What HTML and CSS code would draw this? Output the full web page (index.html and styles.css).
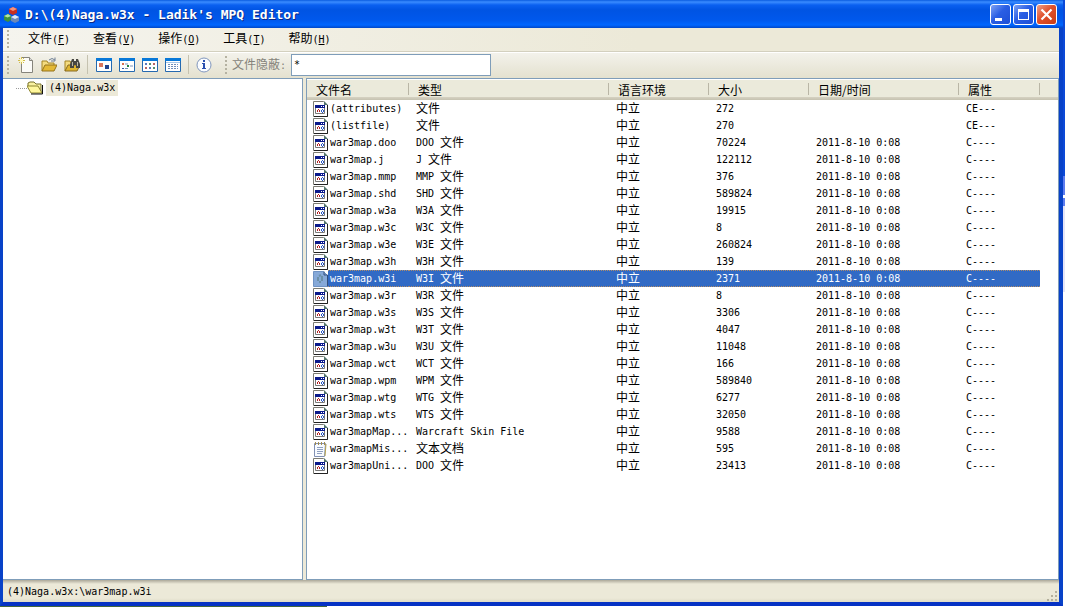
FILE: index.html
```html
<!DOCTYPE html>
<html lang="zh-CN">
<head>
<meta charset="utf-8">
<title>D:\(4)Naga.w3x - Ladik's MPQ Editor</title>
<link rel="stylesheet" href="styles.css">
</head>
<body>
<svg class="defs" aria-hidden="true">
  <symbol id="file" viewBox="0 0 15 16">
    <path d="M.5 .5h10l4 4v11H.5z" fill="#fff" stroke="#7b7b73"/>
    <path d="M14.500 4v11.500H1" fill="none" stroke="#222"/>
    <path d="M11 0l4 4h-4z" fill="#55756c"/>
    <path d="M2.500 4.500h9v8h-9z" fill="#fff" stroke="#777"/>
    <path d="M2 4h10v3H2z" fill="#0a1a8c"/>
    <path d="M8 5h1v1H8zM10 5h1v1h-1z" fill="#fff"/>
    <path d="M4 9h1v2H4zM5 8h1v1H5zM6 9h1v2H6z" fill="#b02020"/>
    <path d="M8 9h1v2H8zM9 8h1v1H9zM10 9h1v2h-1zM9 11h1v1H9z" fill="#2858c8"/>
  </symbol>
  <symbol id="file-selected" viewBox="0 0 15 16">
    <path d="M.5 .5h10l4 4v11H.5z" fill="#86a9d8" stroke="#6f93c4"/>
    <path d="M11 .5v3.500h3.500v11.500" fill="none" stroke="#35507c"/>
    <path d="M5 6v4M9 5v5M6 5l2-1M6 11h2" stroke="#6b90a8" stroke-width="2" fill="none"/>
  </symbol>
  <symbol id="text-file" viewBox="0 0 15 16">
    <path d="M1.500 2.500h11l-1 13h-10z" fill="#f8fbff" stroke="#8291b4"/>
    <path d="M13 3l-1 12" stroke="#b7a24c"/>
    <path d="M2 1h1v3H2zM5 1h1v3H5zM8 1h1v3H8zM11 1h1v3h-1z" fill="#a28d4e"/>
    <path d="M4 6.500h6M4 8.500h6M4 10.500h6M4 12.500h5" stroke="#8fa0c0"/>
  </symbol>
</svg>
<div class="window">
  <header class="titlebar">
    <svg class="app-icon" viewBox="0 0 16 16">
      <path d="M5 2l4-2 4 2v4L9 8 5 6z" fill="#c72f20"/><path d="M5 2l4-2 4 2-4 2z" fill="#f4907c"/>
      <path d="M0 9l4-2 3 2v4l-3 2-4-2z" fill="#3c913f"/><path d="M0 9l4-2 3 2-3.500 1.500z" fill="#b3e39c"/>
      <path d="M7 10l4-2 4 2v4l-4 2-4-2z" fill="#6b88b8"/><path d="M7 10l4-2 4 2-4 2z" fill="#dce8f8"/>
    </svg>
    <h1>D:\(4)Naga.w3x - Ladik's MPQ Editor</h1>
    <button class="caption" aria-label="最小化"><svg viewBox="0 0 19 19"><path d="M4 13h7v3H4z" fill="#fff"/></svg></button>
    <button class="caption" aria-label="最大化"><svg viewBox="0 0 19 19"><path d="M4 4h11v11H4zM5 7v7h9V7z" fill="#fff" fill-rule="evenodd"/></svg></button>
    <button class="caption close" aria-label="关闭"><svg viewBox="0 0 19 19"><path d="M4.500 4.500l10 10M14.500 4.500l-10 10" stroke="#fff" stroke-width="2.200"/></svg></button>
  </header>
  <nav class="menubar">
    <i class="grip"></i>
    <button><span class="zh">文件</span>(<u>F</u>)</button>
    <button><span class="zh">查看</span>(<u>V</u>)</button>
    <button><span class="zh">操作</span>(<u>O</u>)</button>
    <button><span class="zh">工具</span>(<u>T</u>)</button>
    <button><span class="zh">帮助</span>(<u>H</u>)</button>
  </nav>
  <div class="toolbar">
    <i class="grip"></i>
    <div class="tools">
      <button aria-label="新建"><svg viewBox="0 0 16 16"><path d="M3.500 .5h8l3 3v12h-11z" fill="#fbfbf8" stroke="#85847b"/><path d="M11.500 .5v3h3" fill="#ddd" stroke="#85847b"/><path d="M3.500 0v7M0 3.500h7M1 1l5 5M6 1L1 6" stroke="#d2bd4a"/><path d="M2 2h3v3H2z" fill="#fff9ba"/></svg></button>
      <button aria-label="打开"><svg viewBox="0 0 16 16"><path d="M1 14V4h5l1 2h6v3" fill="#f4dc80" stroke="#a48423"/><path d="M1 14l3-6h12l-3 6z" fill="#e3b936" stroke="#95731b"/><path d="M8 3q3-3 6 0M14 .5V4h-4" fill="none" stroke="#6e7f95"/></svg></button>
      <button aria-label="查找"><svg viewBox="0 0 16 16"><path d="M1 14V4h5l1 2h6v3" fill="#f4dc80" stroke="#a48423"/><path d="M1 14l3-6h12l-3 6z" fill="#dfb52f" stroke="#876b22"/><path d="M8 2h2v2h2V2h2l2 5v4h-4V8h-2v3H6V7z" fill="#484742"/><path d="M8 5h1v4H8zM13 5h1v4h-1z" fill="#bbb7a4"/></svg></button>
    </div>
    <i class="separator"></i>
    <div class="tools views">
      <button aria-label="大图标"><svg viewBox="0 0 16 16"><path d="M.5 1.500h15v13H.5z" fill="#fff" stroke="#2569af"/><path d="M0 1h16v3H0z" fill="#0878d8"/><path d="M3 6h4v4H3z" fill="#dc765c"/><path d="M9 8h4v4H9z" fill="#21438e"/></svg></button>
      <button aria-label="小图标"><svg viewBox="0 0 16 16"><path d="M.5 1.500h15v13H.5z" fill="#fff" stroke="#2569af"/><path d="M0 1h16v3H0z" fill="#0878d8"/><path d="M3 6h2v2H3z" fill="#d77052"/><path d="M8 8h2v2H8z" fill="#248441"/><path d="M3 11h2v1H3z" fill="#3155a2"/><path d="M6 7h3M11 9h3M6 11.500h3" stroke="#7894bb"/></svg></button>
      <button aria-label="列表"><svg viewBox="0 0 16 16"><path d="M.5 1.500h15v13H.5z" fill="#fff" stroke="#2569af"/><path d="M0 1h16v3H0z" fill="#0878d8"/><path d="M3 6h2v2H3zM7 10h2v2H7z" fill="#5578bd"/><path d="M7 6h2v2H7zM11 10h2v2h-2z" fill="#55906c"/><path d="M11 6h2v2h-2zM3 10h2v2H3z" fill="#b76464"/></svg></button>
      <button aria-label="详细信息"><svg viewBox="0 0 16 16"><path d="M.5 1.500h15v13H.5z" fill="#fff" stroke="#2569af"/><path d="M0 1h16v3H0z" fill="#0878d8"/><path d="M1 5.500h14" stroke="#a8c7e7"/><path d="M3 7.500h10M3 9.500h10M3 11.500h10" stroke="#718fbb" stroke-dasharray="2 1"/></svg></button>
    </div>
    <i class="separator"></i>
    <button class="info" aria-label="关于"><svg viewBox="0 0 16 16"><circle cx="8" cy="8" r="7" fill="#fafcff" stroke="#8096bd"/><path d="M7 3h2v2H7zM6 6h3v5h1v1H6v-1h1V7H6z" fill="#294faf"/></svg></button>
    <i class="grip second"></i>
    <label for="mask"><span class="zh">文件隐蔽</span>:</label>
    <input id="mask" type="text" value="*">
  </div>
  <main class="panes">
    <aside class="tree">
      <div class="node">
        <i class="branch"></i>
        <svg viewBox="0 0 16 14"><path d="M1 5V2l2-1h4l2 2h5v9" fill="#f8f0a0" stroke="#77702a"/><path d="M0 5h11l4 7H4z" fill="#fff79c" stroke="#8d852e"/><path d="M15.500 4v9H4" fill="none" stroke="#111"/></svg>
        <span>(4)Naga.w3x</span>
      </div>
    </aside>
    <section class="list">
      <table>
        <colgroup><col class="c-name"><col class="c-type"><col class="c-num"><col class="c-num"><col class="c-date"><col class="c-attr"></colgroup>
        <thead><tr class="zh"><th>文件名</th><th>类型</th><th>语言环境</th><th>大小</th><th>日期/时间</th><th>属性</th></tr></thead>
        <tbody>
          <tr><td><div class="name"><svg><use href="#file"/></svg><span>(attributes)</span></div></td><td><span class="zh">文件</span></td><td><span class="zh">中立</span></td><td>272</td><td></td><td>CE---</td></tr>
          <tr><td><div class="name"><svg><use href="#file"/></svg><span>(listfile)</span></div></td><td><span class="zh">文件</span></td><td><span class="zh">中立</span></td><td>270</td><td></td><td>CE---</td></tr>
          <tr><td><div class="name"><svg><use href="#file"/></svg><span>war3map.doo</span></div></td><td>DOO <span class="zh">文件</span></td><td><span class="zh">中立</span></td><td>70224</td><td>2011-8-10 0:08</td><td>C----</td></tr>
          <tr><td><div class="name"><svg><use href="#file"/></svg><span>war3map.j</span></div></td><td>J <span class="zh">文件</span></td><td><span class="zh">中立</span></td><td>122112</td><td>2011-8-10 0:08</td><td>C----</td></tr>
          <tr><td><div class="name"><svg><use href="#file"/></svg><span>war3map.mmp</span></div></td><td>MMP <span class="zh">文件</span></td><td><span class="zh">中立</span></td><td>376</td><td>2011-8-10 0:08</td><td>C----</td></tr>
          <tr><td><div class="name"><svg><use href="#file"/></svg><span>war3map.shd</span></div></td><td>SHD <span class="zh">文件</span></td><td><span class="zh">中立</span></td><td>589824</td><td>2011-8-10 0:08</td><td>C----</td></tr>
          <tr><td><div class="name"><svg><use href="#file"/></svg><span>war3map.w3a</span></div></td><td>W3A <span class="zh">文件</span></td><td><span class="zh">中立</span></td><td>19915</td><td>2011-8-10 0:08</td><td>C----</td></tr>
          <tr><td><div class="name"><svg><use href="#file"/></svg><span>war3map.w3c</span></div></td><td>W3C <span class="zh">文件</span></td><td><span class="zh">中立</span></td><td>8</td><td>2011-8-10 0:08</td><td>C----</td></tr>
          <tr><td><div class="name"><svg><use href="#file"/></svg><span>war3map.w3e</span></div></td><td>W3E <span class="zh">文件</span></td><td><span class="zh">中立</span></td><td>260824</td><td>2011-8-10 0:08</td><td>C----</td></tr>
          <tr><td><div class="name"><svg><use href="#file"/></svg><span>war3map.w3h</span></div></td><td>W3H <span class="zh">文件</span></td><td><span class="zh">中立</span></td><td>139</td><td>2011-8-10 0:08</td><td>C----</td></tr>
          <tr class="selected"><td><div class="name"><svg><use href="#file-selected"/></svg><span>war3map.w3i</span></div></td><td>W3I <span class="zh">文件</span></td><td><span class="zh">中立</span></td><td>2371</td><td>2011-8-10 0:08</td><td>C----</td></tr>
          <tr><td><div class="name"><svg><use href="#file"/></svg><span>war3map.w3r</span></div></td><td>W3R <span class="zh">文件</span></td><td><span class="zh">中立</span></td><td>8</td><td>2011-8-10 0:08</td><td>C----</td></tr>
          <tr><td><div class="name"><svg><use href="#file"/></svg><span>war3map.w3s</span></div></td><td>W3S <span class="zh">文件</span></td><td><span class="zh">中立</span></td><td>3306</td><td>2011-8-10 0:08</td><td>C----</td></tr>
          <tr><td><div class="name"><svg><use href="#file"/></svg><span>war3map.w3t</span></div></td><td>W3T <span class="zh">文件</span></td><td><span class="zh">中立</span></td><td>4047</td><td>2011-8-10 0:08</td><td>C----</td></tr>
          <tr><td><div class="name"><svg><use href="#file"/></svg><span>war3map.w3u</span></div></td><td>W3U <span class="zh">文件</span></td><td><span class="zh">中立</span></td><td>11048</td><td>2011-8-10 0:08</td><td>C----</td></tr>
          <tr><td><div class="name"><svg><use href="#file"/></svg><span>war3map.wct</span></div></td><td>WCT <span class="zh">文件</span></td><td><span class="zh">中立</span></td><td>166</td><td>2011-8-10 0:08</td><td>C----</td></tr>
          <tr><td><div class="name"><svg><use href="#file"/></svg><span>war3map.wpm</span></div></td><td>WPM <span class="zh">文件</span></td><td><span class="zh">中立</span></td><td>589840</td><td>2011-8-10 0:08</td><td>C----</td></tr>
          <tr><td><div class="name"><svg><use href="#file"/></svg><span>war3map.wtg</span></div></td><td>WTG <span class="zh">文件</span></td><td><span class="zh">中立</span></td><td>6277</td><td>2011-8-10 0:08</td><td>C----</td></tr>
          <tr><td><div class="name"><svg><use href="#file"/></svg><span>war3map.wts</span></div></td><td>WTS <span class="zh">文件</span></td><td><span class="zh">中立</span></td><td>32050</td><td>2011-8-10 0:08</td><td>C----</td></tr>
          <tr><td><div class="name"><svg><use href="#file"/></svg><span>war3mapMap...</span></div></td><td>Warcraft Skin File</td><td><span class="zh">中立</span></td><td>9588</td><td>2011-8-10 0:08</td><td>C----</td></tr>
          <tr><td><div class="name"><svg><use href="#text-file"/></svg><span>war3mapMis...</span></div></td><td><span class="zh">文本文档</span></td><td><span class="zh">中立</span></td><td>595</td><td>2011-8-10 0:08</td><td>C----</td></tr>
          <tr><td><div class="name"><svg><use href="#file"/></svg><span>war3mapUni...</span></div></td><td>DOO <span class="zh">文件</span></td><td><span class="zh">中立</span></td><td>23413</td><td>2011-8-10 0:08</td><td>C----</td></tr>
        </tbody>
      </table>
    </section>
  </main>
  <footer class="statusbar">
    <span>(4)Naga.w3x:\war3map.w3i</span>
    <svg viewBox="0 0 12 12"><path d="M9 1h2v2H9zM5 5h2v2H5zM9 5h2v2H9zM1 9h2v2H1zM5 9h2v2H5zM9 9h2v2H9z" fill="#b4b09c"/></svg>
  </footer>
</div>
</body>
</html>
```
FILE: styles.css
```css
* { box-sizing: border-box; }
body {
  margin: 0;
  height: 100vh;
  padding: 0 2px 1px 0;
  font: 10px/16px "DejaVu Sans Mono", "Noto Sans CJK SC", monospace;
  color: #000;
  background:
    linear-gradient(90deg, #46683c 327px, transparent 327px) bottom / 100% 1px no-repeat,
    linear-gradient(#0b49d8 0 176px, #5c7cf0 176px 195px, #fff 195px 198px, #5c7cf0 198px 206px, #e4e4f8 206px 292px, #fff 292px);
}
button { border: 0; padding: 0; background: none; font: inherit; color: inherit; }
svg { display: block; flex: none; }
.defs { position: absolute; width: 0; height: 0; }
.zh { font: 12px/16px "Noto Sans CJK SC", sans-serif; }

.window {
  height: 100%;
  display: flex;
  flex-direction: column;
  border: solid #0842c8;
  border-width: 0 4px 4px 3px;
  border-bottom-color: #0632c4;
  background: #ece9d8;
}
.titlebar {
  flex: none;
  height: 28px;
  margin: 0 -4px 0 -3px;
  padding: 1px 6px 0 4px;
  display: flex;
  align-items: center;
  gap: 2px;
  background: linear-gradient(#0a5ce0 0, #3a8cff 2px, #0a60f0 5px, #0054e3 10px, #0058ec 20px, #0066ff 25px, #0047c8 28px);
}
.app-icon { width: 16px; height: 16px; }
h1 {
  flex: 1;
  margin: 0 0 0 3px;
  font: bold 13px/16px "DejaVu Sans Mono", monospace;
  color: #fff;
  text-shadow: 1px 1px #0a2a86;
  white-space: nowrap;
}
.caption {
  width: 21px;
  height: 21px;
  border: 1px solid #fff;
  border-radius: 3px;
  background: linear-gradient(135deg, #7ea2f4, #2a5ee4 45%, #1d4fd6);
}
.caption svg { width: 19px; height: 19px; }
.caption.close { background: linear-gradient(135deg, #f0a088, #e0512c 45%, #c83c14); }

.menubar, .toolbar {
  flex: none;
  display: flex;
  align-items: center;
  padding-left: 4px;
}
.menubar { height: 24px; gap: 23px; padding-bottom: 1px; border-bottom: 1px solid #d3d0bf; background: linear-gradient(90deg, #f5f4ee, #ece9d8 60%); }
.menubar .grip { margin-right: -4px; }
.menubar button { white-space: nowrap; }
.toolbar { height: 26px; padding-bottom: 2px; border-top: 1px solid #fff; background: linear-gradient(#f3f2eb, #e4e1cf); }
.grip {
  flex: none;
  width: 2px;
  height: 18px;
  background: repeating-linear-gradient(#b5b2a2 0 2px, transparent 2px 4px);
}
.tools { display: flex; gap: 7px; margin-left: 9px; }
.tools svg, .info svg { width: 16px; height: 16px; }
.separator { width: 1px; height: 19px; margin-left: 7px; background: #c5c2b0; }
.separator + .tools { margin-left: 8px; }
.info { margin-left: 7px; }
.second { margin: 0 5px 0 13px; }
label { width: 59px; color: #85837a; white-space: nowrap; }
input {
  width: 200px;
  height: 22px;
  padding: 0 2px;
  border: 1px solid #7f9db9;
  background: #fff;
  font: inherit;
  outline: 0;
}

.panes { flex: 1; min-height: 0; display: flex; gap: 3px; }
.tree, .list { border: 1px solid #7f9db9; background: #fff; }
.tree { flex: none; width: 300px; border-left: 0; }
.list { flex: 1; padding: 0 2px; overflow: hidden; background: linear-gradient(#fff 1px, #ebeadb 1px 18px, #d6d2c2 18px, #c5c2b0 21px, #fff 21px); }
.node { display: flex; align-items: center; padding: 1px 0 0 13px; }
.branch { width: 11px; border-top: 1px dotted #999; }
.node svg { width: 16px; height: 14px; }
.node span { margin-left: 3px; padding: 0 3px; background: #ece9d8; }

table { width: 731px; table-layout: fixed; border-collapse: separate; border-spacing: 0; white-space: nowrap; }
.c-name, .c-num { width: 100px; }
.c-type { width: 200px; }
.c-date { width: 150px; }
.c-attr { width: 81px; }
th { height: 21px; padding: 0 0 0 9px; text-align: left; font-weight: normal; background: linear-gradient(#b9b6a6, #b9b6a6) right 4px / 1px 12px no-repeat; }
th:first-child { padding-left: 7px; }
td { height: 17px; padding: 0 0 0 7px; line-height: 16px; }
td .zh { line-height: 16px; vertical-align: -1px; }
td:first-child { padding-left: 4px; }
.name { display: flex; align-items: center; }
.name svg { width: 15px; height: 16px; }
.name span { flex: 1; height: 17px; padding-left: 2px; line-height: 17px; }
.selected td, .selected .name span {
  color: #fff;
  background:
    repeating-linear-gradient(90deg, #b08c68 0 1px, transparent 1px 2px) top / 100% 1px no-repeat,
    repeating-linear-gradient(90deg, #b08c68 0 1px, transparent 1px 2px) bottom / 100% 1px no-repeat,
    #316ac5;
}
.selected td:first-child { background: none; }

.statusbar {
  flex: none;
  height: 22px;
  display: flex;
  align-items: center;
  justify-content: space-between;
  padding: 2px 1px 0 4px;
  background: linear-gradient(#aca899, #ece9d8 4px, #ece9d8 18px, #dedbc8);
}
.statusbar svg { width: 12px; height: 12px; align-self: flex-end; }
```
